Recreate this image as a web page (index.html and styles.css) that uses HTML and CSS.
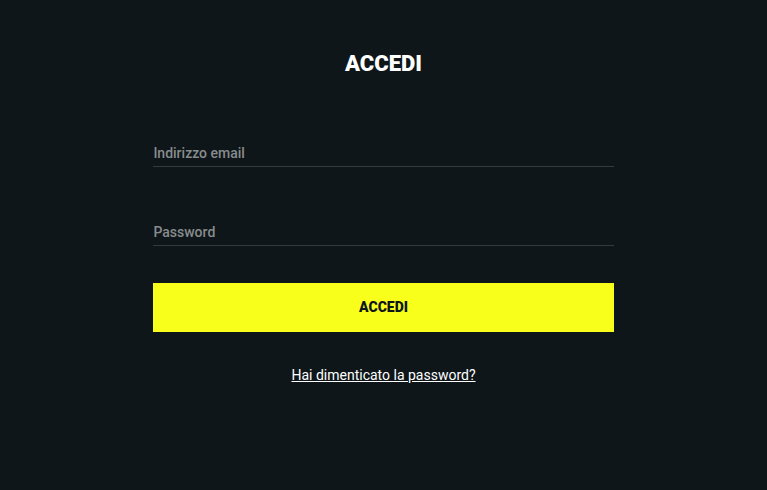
FILE: index.html
```
<!DOCTYPE html>
<html lang="it">
<head>
  <meta charset="UTF-8" />
  <meta name="viewport" content="width=device-width, initial-scale=1.0"/>
  <title>Accedi</title>
  <link rel="stylesheet" href="styles.css">
</head>
<body>

  <main class="login">
    <h1 class="login-title">ACCEDI</h1>

    <form class="login-form">
      <input class="field" type="email" id="email" name="email" placeholder="Indirizzo email" aria-label="Indirizzo email" />
      <input class="field" type="password" id="password" name="password" placeholder="Password" aria-label="Password" />
      <button class="login-btn" type="submit">ACCEDI</button>
    </form>

    <a class="forgot" href="#">Hai dimenticato la password?</a>
  </main>

</body>
</html>
```

FILE: styles.css
```
* {
  box-sizing: border-box;
  margin: 0;
  padding: 0;
}

body {
  font-family: Roboto, "Liberation Sans", sans-serif;
  background: #0e1619;
  color: #fff;
}

.login {
  width: 60%;
  margin: 0 auto;
  padding: 48px 0;
  text-align: center;
}

.login-title {
  font-size: 22px;
  line-height: 32px;
  font-weight: 900;
}

.login-form {
  margin-top: 23px;
}

.field {
  display: block;
  width: 100%;
  padding: 42px 0 5px;
  margin-bottom: 15px;
  border: none;
  border-bottom: 1px solid #343b3d;
  border-radius: 0;
  background: transparent;
  color: #fff;
  font-family: inherit;
  font-size: 14px;
  line-height: 16px;
  font-weight: 500;
  outline: none;
}

.field::placeholder {
  color: #888c8d;
  opacity: 1;
}

.field:focus {
  border-bottom-color: #f8ff1b;
}

.login-btn {
  display: block;
  width: 100%;
  padding: 16px 0 17px;
  margin-top: 37px;
  border: none;
  background: #f8ff1b;
  color: #0e1619;
  font-family: inherit;
  font-size: 14px;
  line-height: 16px;
  font-weight: 900;
  cursor: pointer;
}

.forgot {
  display: inline-block;
  margin-top: 32px;
  color: #fff;
  font-size: 14px;
  line-height: 22px;
}
```
